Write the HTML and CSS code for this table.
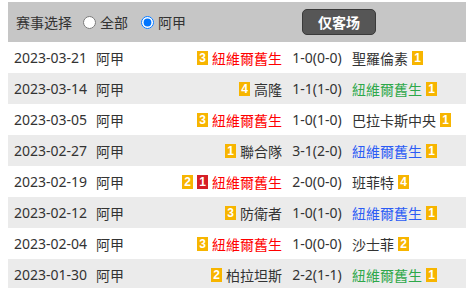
FILE: index.html
```html
<!DOCTYPE html>
<html>
<head>
<meta charset="utf-8">
<link rel="stylesheet" href="styles.css">
</head>
<body>
<div class="wrap">
  <div class="head">
    <span class="label">赛事选择</span>
    <label class="opt"><input type="radio" name="lg"><span>全部</span></label>
    <label class="opt"><input type="radio" name="lg" checked><span>阿甲</span></label>
    <button class="btn">仅客场</button>
  </div>
  <div class="row">
    <span class="date">2023-03-21</span><span class="lg">阿甲</span>
    <span class="home"><b class="bd y">3</b><span class="red">紐維爾舊生</span></span>
    <span class="score">1-0(0-0)</span>
    <span class="away"><span>聖羅倫素</span><b class="bd y">1</b></span>
  </div>
  <div class="row alt">
    <span class="date">2023-03-14</span><span class="lg">阿甲</span>
    <span class="home"><b class="bd y">4</b><span>高隆</span></span>
    <span class="score">1-1(1-0)</span>
    <span class="away"><span class="green">紐維爾舊生</span><b class="bd y">1</b></span>
  </div>
  <div class="row">
    <span class="date">2023-03-05</span><span class="lg">阿甲</span>
    <span class="home"><b class="bd y">3</b><span class="red">紐維爾舊生</span></span>
    <span class="score">1-0(1-0)</span>
    <span class="away"><span>巴拉卡斯中央</span><b class="bd y">1</b></span>
  </div>
  <div class="row alt">
    <span class="date">2023-02-27</span><span class="lg">阿甲</span>
    <span class="home"><b class="bd y">1</b><span>聯合隊</span></span>
    <span class="score">3-1(2-0)</span>
    <span class="away"><span class="blue">紐維爾舊生</span><b class="bd y">1</b></span>
  </div>
  <div class="row">
    <span class="date">2023-02-19</span><span class="lg">阿甲</span>
    <span class="home"><b class="bd y">2</b><b class="bd r">1</b><span class="red">紐維爾舊生</span></span>
    <span class="score">2-0(0-0)</span>
    <span class="away"><span>班菲特</span><b class="bd y">4</b></span>
  </div>
  <div class="row alt">
    <span class="date">2023-02-12</span><span class="lg">阿甲</span>
    <span class="home"><b class="bd y">3</b><span>防衛者</span></span>
    <span class="score">1-0(1-0)</span>
    <span class="away"><span class="blue">紐維爾舊生</span><b class="bd y">1</b></span>
  </div>
  <div class="row">
    <span class="date">2023-02-04</span><span class="lg">阿甲</span>
    <span class="home"><b class="bd y">3</b><span class="red">紐維爾舊生</span></span>
    <span class="score">1-0(0-0)</span>
    <span class="away"><span>沙士菲</span><b class="bd y">2</b></span>
  </div>
  <div class="row alt">
    <span class="date">2023-01-30</span><span class="lg">阿甲</span>
    <span class="home"><b class="bd y">2</b><span>柏拉坦斯</span></span>
    <span class="score">2-2(1-1)</span>
    <span class="away"><span class="green">紐維爾舊生</span><b class="bd y">1</b></span>
  </div>
</div>
</body>
</html>
```
FILE: styles.css
```css
html, body {
  margin: 0;
  padding: 0;
  background: #fff;
}
body {
  padding: 2px 0 0 8px;
  font-family: "Segoe UI", "Noto Sans", "Noto Sans CJK SC", sans-serif;
  font-size: 14px;
  color: #333;
  overflow: hidden;
}
.wrap {
  width: 470px;
}
.head {
  height: 40px;
  background: #c6c6c6;
  display: flex;
  align-items: center;
  padding-left: 8px;
}
.label {
  margin-right: 8px;
}
.opt {
  display: flex;
  align-items: center;
  margin-right: 10px;
}
.opt input {
  margin: 0 4px 0 3px;
  width: 13px;
  height: 13px;
}
.btn {
  margin-left: 106px;
  width: 74px;
  height: 26px;
  background: #565656;
  border: 1px solid #3a3a3a;
  border-radius: 5px;
  color: #fff;
  font-family: "Noto Sans CJK SC", sans-serif;
  font-size: 14px;
  font-weight: bold;
  padding: 0;
}
.row {
  height: 31px;
  display: grid;
  grid-template-columns: 82px 60px 126px 70px auto;
  align-items: center;
  padding-left: 6px;
  white-space: nowrap;
}
.row.alt {
  background: #ebebeb;
}
.home {
  display: flex;
  justify-content: flex-end;
  align-items: center;
  gap: 4px;
}
.away {
  display: flex;
  align-items: center;
  gap: 4px;
}
.score {
  text-align: center;
}
.bd {
  display: inline-block;
  min-width: 9px;
  height: 14px;
  line-height: 14px;
  padding: 0 1px;
  font-size: 12px;
  font-weight: bold;
  color: #fff;
  text-align: center;
  font-family: "Liberation Sans", Arial, sans-serif;
}
.bd.y { background: #f7b500; }
.bd.r { background: #d61f26; }
.red { color: #ff0000; }
.green { color: #2ea84a; }
.blue { color: #2b5cf5; }
```
